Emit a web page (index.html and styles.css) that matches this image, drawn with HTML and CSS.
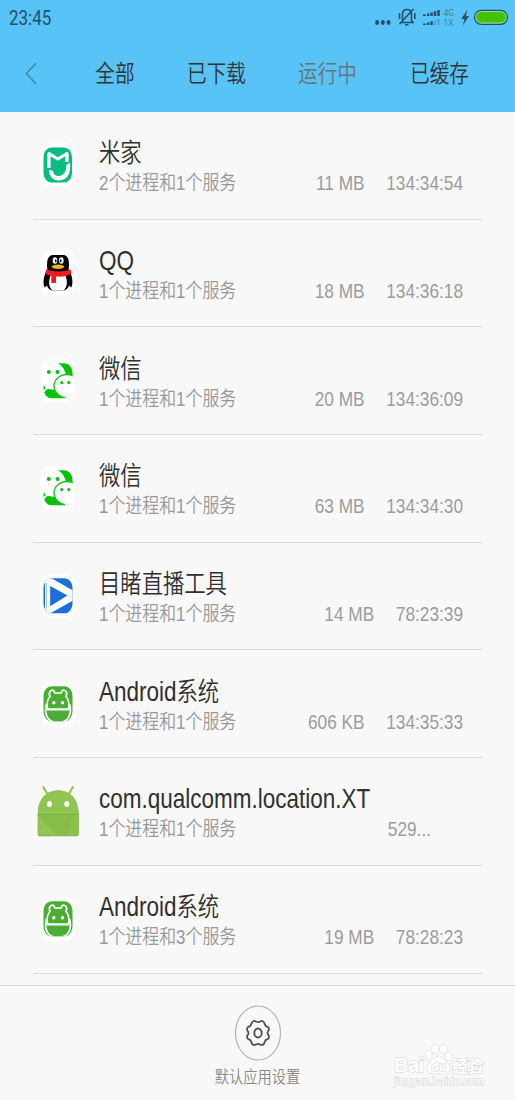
FILE: index.html
```
<!DOCTYPE html>
<html lang="zh-CN">
<head>
    <meta charset="UTF-8">
    <meta name="viewport" content="width=device-width, initial-scale=1.0">
    <title>运行中</title>
    <link rel="stylesheet" href="styles.css">
</head>
<body>
    <header class="header">
        <div class="status-bar">
            <span class="clock">23:45</span>
            <svg class="status-icons" width="140" height="36" viewBox="0 0 140 36">
                <g fill="#24506a">
                    <ellipse cx="2.1" cy="22.5" rx="2" ry="2.4"/>
                    <ellipse cx="7.8" cy="22.5" rx="2" ry="2.4"/>
                    <ellipse cx="13.500" cy="22.5" rx="2" ry="2.4"/>
                </g>
                <g fill="none" stroke="#24506a" stroke-width="1.6">
                    <path d="M26 22.500h13M27.500 20.500v-6c0-3.500 2-5 4.500-5s4.500 1.500 4.500 5v6l1.500 2M24.500 24L38.500 9M30 24.800h3.500"/>
                    <path d="M24.500 13v6M39.800 13v6"/>
                </g>
                <g fill="#24506a">
                    <path d="M48 14.500h3v1.500h-3zM52 13.500h2.400v2.500h-2.400zM55.400 12.500h2.400v3.500h-2.400zM58.800 11.300h2.400v4.700h-2.400zM62.300 10h2.500v6h-2.500z"/>
                    <path d="M48 23.500h3v1.500h-3zM52 22.500h2.400v2.500h-2.400zM55.400 21.300h2.400v3.700h-2.400z"/>
                    <path opacity=".25" d="M58.800 20.300h2.400v4.700h-2.400zM62.300 19h2.500v6h-2.500z"/>
                    <path d="M92.500 9.500l-6.300 9.500h3.300l-1.700 6.500 6.200-9.500h-3.200z"/>
                </g>
                <text class="net" x="68.500" y="16" textLength="10.500" lengthAdjust="spacingAndGlyphs">4G</text>
                <text class="net" x="68.500" y="26" textLength="10" lengthAdjust="spacingAndGlyphs">1X</text>
                <rect x="99.500" y="10.300" width="33" height="14" rx="7" fill="#8fd8ae" stroke="#24506a" stroke-width="1.300"/>
                <rect x="101.200" y="12" width="29.600" height="10.600" rx="5.300" fill="#43c400"/>
            </svg>
        </div>
        <nav class="tabs">
            <svg class="back" width="14" height="24" viewBox="0 0 14 24">
                <path d="M12 1L2.500 11.500l9.500 10.500" fill="none" stroke="#3c87a8" stroke-width="1.500"/>
            </svg>
            <span class="tab">全部</span>
            <span class="tab">已下载</span>
            <span class="tab active">运行中</span>
            <span class="tab">已缓存</span>
        </nav>
    </header>

    <main class="list">
        <div class="row">
            <svg class="icon" viewBox="0 0 50 54">
                <rect class="plate" x="7.500" y="5" width="35" height="44" rx="9" ry="11"/>
                <rect x="10.500" y="9.500" width="28.500" height="35" rx="8" ry="9.500" fill="#07bd82"/>
                <path d="M16 30V15.500l8.800 5.500 9.200-5.500V24" fill="none" stroke="#fff" stroke-width="3.200" stroke-linejoin="round"/>
                <path d="M15.800 31.800l4 1c.8 4.200 4 6 7.500 5 4.300-1.400 6-5 6.200-11l3.600-2.300v6.500c-1 8-5.600 11.500-11.300 11.500-6 0-9.500-4-10-10.700z" fill="#fff"/>
            </svg>
            <div class="info">
                <div class="title">米家</div>
                <div class="desc">2个进程和1个服务</div>
            </div>
            <div class="meta"><span>11 MB</span><span>134:34:54</span></div>
        </div>

        <div class="row">
            <svg class="icon" viewBox="0 0 50 54">
                <rect class="plate" x="7.500" y="5" width="35" height="44" rx="9" ry="11"/>
                <path d="M14.500 25c-1-8-1-16 6-16h9.500c6.500 0 6.500 8 5.500 16z" fill="#050505"/>
                <path d="M13.500 25c-3 5-4 13-1.700 16.500l2.200-2c.8 2.500 2.500 4.300 5 5h12c2.500-.7 4.200-2.500 5-5l2.200 2c2.300-3.500 1.300-11.500-1.700-16.500z" fill="#050505"/>
                <path d="M17.800 29h14.400c2.600 6 2.200 12-1.700 15.500h-11c-3.900-3.500-4.300-9.500-1.700-15.500z" fill="#fff"/>
                <path d="M13 23.300c7 3 17 3 24.500 0l.8 4.500c-5 3-10 3-15.300 2.700v6.500h-4.700v-7.500c-2-.3-4-.8-5.800-1.800z" fill="#ed1c1c"/>
                <ellipse cx="22" cy="14.500" rx="2.300" ry="3.300" fill="#fff"/>
                <ellipse cx="28.300" cy="14.500" rx="2.300" ry="3.300" fill="#fff"/>
                <ellipse cx="22.700" cy="14.700" rx=".9" ry="1.500"/>
                <ellipse cx="27.700" cy="14.700" rx=".9" ry="1.500"/>
                <ellipse cx="25" cy="20.700" rx="6.300" ry="2.200" fill="#f9b414"/>
            </svg>
            <div class="info">
                <div class="title"><span class="latin">QQ</span></div>
                <div class="desc">1个进程和1个服务</div>
            </div>
            <div class="meta"><span>18 MB</span><span>134:36:18</span></div>
        </div>

        <div class="row">
            <svg class="icon" viewBox="0 0 50 54">
                <defs>
                    <clipPath id="round"><rect x="10.500" y="9.300" width="29" height="35" rx="8" ry="9.500"/></clipPath>
                    <g id="wechat">
                        <rect class="plate" x="7.500" y="5" width="35" height="44" rx="9" ry="11"/>
                        <g clip-path="url(#round)">
                            <path d="M25 9h15v14l-7-2c-1-5-3.500-9-8-12z" fill="#09c10c"/>
                            <path d="M10 39c2.500-1 3-4 5-4s4 1.200 8 .3l12 7V45H10zM10 31.500c1.500 0 2.500 1.500 2 3.500l-2 1z" fill="#09c10c"/>
                            <ellipse cx="34" cy="32" rx="13" ry="11.500" fill="#fff" stroke="#09c10c" stroke-width="1.300"/>
                            <path d="M32 43l6-12h3v14h-8z" fill="#fff"/>
                        </g>
                        <g fill="#09c10c">
                            <circle cx="15.800" cy="18.100" r="2"/>
                            <circle cx="24.500" cy="18.100" r="2"/>
                            <circle cx="28.800" cy="28.600" r="1.600"/>
                            <circle cx="35.800" cy="28.600" r="1.600"/>
                        </g>
                    </g>
                </defs>
                <use href="#wechat"/>
            </svg>
            <div class="info">
                <div class="title">微信</div>
                <div class="desc">1个进程和1个服务</div>
            </div>
            <div class="meta"><span>20 MB</span><span>134:36:09</span></div>
        </div>

        <div class="row">
            <svg class="icon" viewBox="0 0 50 54"><use href="#wechat"/></svg>
            <div class="info">
                <div class="title">微信</div>
                <div class="desc">1个进程和1个服务</div>
            </div>
            <div class="meta"><span>63 MB</span><span>134:34:30</span></div>
        </div>

        <div class="row">
            <svg class="icon" viewBox="0 0 50 54">
                <rect class="plate" x="7.500" y="5" width="35" height="44" rx="9" ry="11"/>
                <g clip-path="url(#round)">
                    <path d="M10 9h30v36H10z" fill="#1a6fd8"/>
                    <path d="M12 5v44l5-4.500 23-13v-10L18 9z" fill="#fff"/>
                    <path d="M13.500 14v26" stroke="#a9c9ef" stroke-width="1"/>
                    <path d="M17.200 17v20.200l17.200-10.600z" fill="#1a6fd8"/>
                </g>
            </svg>
            <div class="info">
                <div class="title">目睹直播工具</div>
                <div class="desc">1个进程和1个服务</div>
            </div>
            <div class="meta"><span>14 MB</span><span>78:23:39</span></div>
        </div>

        <div class="row">
            <svg class="icon" viewBox="0 0 50 54">
                <defs>
                    <g id="bot">
                        <rect class="plate" x="7.500" y="5" width="35" height="44" rx="9" ry="11"/>
                        <g clip-path="url(#round)">
                            <path d="M10 9h30v36H10z" fill="#4aae35"/>
                            <g fill="#4aae35" stroke="#fff" stroke-width="1.700">
                                <path d="M13.500 27c-2.500 9 0 18.500 11.500 18.500s14-9.500 11.500-18.500"/>
                                <path d="M14.500 32c-1-6 0-10 2.500-12.500-2-4 1.200-8 4-5.500l.8 2h6.400l.8-2c2.800-2.500 6 1.500 4 5.500 2.500 2.500 3.500 6.500 2.500 12.500"/>
                            </g>
                            <path d="M13.500 31.200h23v2.300h-23z" fill="#fff"/>
                        </g>
                        <circle cx="20.800" cy="25.800" r="1.700" fill="#fff"/>
                        <circle cx="29.500" cy="25.800" r="1.700" fill="#fff"/>
                    </g>
                </defs>
                <use href="#bot"/>
            </svg>
            <div class="info">
                <div class="title"><span class="latin">Android</span>系统</div>
                <div class="desc">1个进程和1个服务</div>
            </div>
            <div class="meta"><span>606 KB</span><span>134:35:33</span></div>
        </div>

        <div class="row">
            <svg class="icon" viewBox="0 0 50 54">
                <path d="M10.300 3l5 8.500M39.900 3l-5 8.500" stroke="#8bc34a" stroke-width="2" stroke-linecap="round"/>
                <path d="M4.800 30c0-14 8-23.300 20.400-23.300S45.500 16 45.500 30v20c0 1.500-.7 2.300-2 2.300H7c-1.400 0-2.200-.8-2.200-2.300z" fill="#7f9f60"/>
                <path d="M4.800 29.500c0-14 8-23.200 20.400-23.200s20.300 9.200 20.300 23.200v19.800c0 1.500-.7 2.300-2 2.300H7c-1.400 0-2.200-.8-2.200-2.300z" fill="#8fc550"/>
                <path d="M5 31l19 20.500h10L41 31z" fill="#87bc49"/>
                <path d="M34 51.500h9.500c1.300 0 2-.8 2-2.300V31H41z" fill="#8bc34a"/>
                <path d="M4.800 30.500h40.700" stroke="#7aaf43" stroke-width="1"/>
                <ellipse cx="16.500" cy="20" rx="2.500" ry="3" fill="#fff"/>
                <ellipse cx="33.800" cy="20" rx="2.500" ry="3" fill="#fff"/>
            </svg>
            <div class="info">
                <div class="title"><span class="latin">com.qualcomm.location.XT</span></div>
                <div class="desc">1个进程和1个服务</div>
            </div>
            <div class="meta cut"><span>529...</span></div>
        </div>

        <div class="row">
            <svg class="icon" viewBox="0 0 50 54"><use href="#bot"/></svg>
            <div class="info">
                <div class="title"><span class="latin">Android</span>系统</div>
                <div class="desc">1个进程和3个服务</div>
            </div>
            <div class="meta"><span>19 MB</span><span>78:28:23</span></div>
        </div>
    </main>

    <footer class="footer">
        <svg width="48" height="58" viewBox="0 0 48 58">
            <ellipse cx="24" cy="29" rx="22.500" ry="27" fill="none" stroke="#b4b4b4" stroke-width="1.200"/>
            <path d="M24 18.200c2 0 2.500-1.700 4.500-1.200 2.200.7 2 3.700 3.300 5 1.300 1 3.200.5 3.200 3 0 2-1.500 2.300-1.500 4s1.500 2 1.500 4c0 2.500-1.900 2-3.200 3-1.300 1.300-1.100 4.300-3.300 5-2 .5-2.500-1.200-4.500-1.200s-2.500 1.700-4.500 1.200c-2.200-.7-2-3.700-3.300-5-1.300-1-3.200-.5-3.200-3 0-2 1.500-2.300 1.500-4s-1.500-2-1.500-4c0-2.500 1.900-2 3.200-3 1.300-1.300 1.100-4.300 3.300-5 2-.5 2.500 1.200 4.500 1.200z" fill="none" stroke="#505050" stroke-width="1.800"/>
            <ellipse cx="24" cy="29" rx="3.700" ry="4.500" fill="none" stroke="#505050" stroke-width="1.900"/>
        </svg>
        <span class="footer-label">默认应用设置</span>
    </footer>

    <svg class="watermark" width="110" height="56" viewBox="0 0 110 56">
        <g fill="#fff" stroke="#dfdfdf" stroke-width="1.500" paint-order="stroke">
            <text class="brand" x="3" y="32" textLength="30">Bai</text>
            <text class="brand-cn" x="61" y="32" textLength="31">经验</text>
            <text class="brand-url" x="3" y="45" textLength="90">jingyan.baidu.com</text>
            <ellipse cx="37.500" cy="15" rx="3.200" ry="4.300"/>
            <ellipse cx="44.300" cy="9" rx="3.300" ry="4.500"/>
            <ellipse cx="52.300" cy="9" rx="3.300" ry="4.500"/>
            <ellipse cx="57.700" cy="16" rx="3.200" ry="4.300"/>
            <path d="M48 16.500c4 0 5.500 4 8.500 7 4 3.500 2.500 9.500-2.500 10H41c-5-.5-6.500-6.500-2.500-10 3-3 5.500-7 9.500-7z"/>
            <text class="brand-du" x="40" y="31" textLength="15">du</text>
        </g>
    </svg>
</body>
</html>
```
FILE: styles.css
```
* {
    box-sizing: border-box;
}
body {
    display: flex;
    flex-direction: column;
    position: relative;
    height: 1100px;
    margin: 0;
    overflow: hidden;
    background-color: #f8f8f8;
    font-family: "Liberation Sans", "Noto Sans CJK SC", sans-serif;
    font-weight: 350;
}
.header {
    height: 112px;
    background-color: #58c3f7;
}
.status-bar {
    display: flex;
    justify-content: space-between;
    align-items: center;
    height: 36px;
    padding-left: 9px;
}
.clock {
    font-family: Roboto, sans-serif;
    font-size: 19.5px;
    font-weight: 400;
    color: #24506a;
    transform: scaleX(0.87);
    transform-origin: left;
}
.net {
    font-family: Roboto, sans-serif;
    font-size: 8.3px;
    fill: #2f6680;
}
.tabs {
    display: grid;
    grid-template-columns: 69px 92px 111px 111px 113px;
    align-items: center;
    height: 76px;
}
.back {
    margin-left: 24px;
}
.tab {
    font-size: 23.7px;
    line-height: 30px;
    text-align: center;
    color: #333;
    transform: scaleX(0.83);
}
.tab.active {
    color: #6b7378;
}
.list {
    display: grid;
    grid-template-rows: repeat(8, 107.7px);
    height: 873px;
    padding: 0 33px;
}
.row {
    display: flex;
    align-items: center;
    border-bottom: 1px solid #dcdcdc;
}
.icon {
    flex: none;
    width: 50px;
    height: 54px;
    margin-right: 16px;
}
.plate {
    fill: #fdfdfd;
}
/* all text is narrowed horizontally */
.info {
    flex: none;
    width: 300px;
    padding-top: 6px;
    transform: scaleX(0.83);
    transform-origin: left;
    white-space: nowrap;
}
.title {
    height: 30px;
    font-size: 25.7px;
    line-height: 30px;
    color: #303030;
}
.latin {
    font-size: 27.1px;
}
.desc {
    height: 30px;
    font-size: 20.4px;
    line-height: 30px;
    color: #999;
}
.meta {
    display: flex;
    flex: 1;
    justify-content: flex-end;
    gap: 26px;
    width: 0;
    padding-top: 36px;
    margin-right: 19px;
    font-size: 20.8px;
    line-height: 30px;
    color: #9c9c9c;
    white-space: nowrap;
    transform: scaleX(0.83);
    transform-origin: right;
}
.meta.cut {
    margin-right: 51px;
}
.footer {
    display: flex;
    flex-direction: column;
    align-items: center;
    flex: 1;
    padding-top: 18px;
    border-top: 1px solid #dcdcdc;
}
.footer-label {
    margin-top: 3px;
    font-size: 17.2px;
    line-height: 24px;
    color: #888;
    transform: scaleX(0.83);
}
.watermark {
    position: absolute;
    left: 391px;
    top: 1040px;
}
.brand {
    font-size: 20px;
    font-weight: bold;
}
.brand-du {
    font-size: 12px;
    font-weight: bold;
}
.brand-cn {
    font-size: 16px;
    font-weight: bold;
}
.brand-url {
    font-size: 11px;
}
```
